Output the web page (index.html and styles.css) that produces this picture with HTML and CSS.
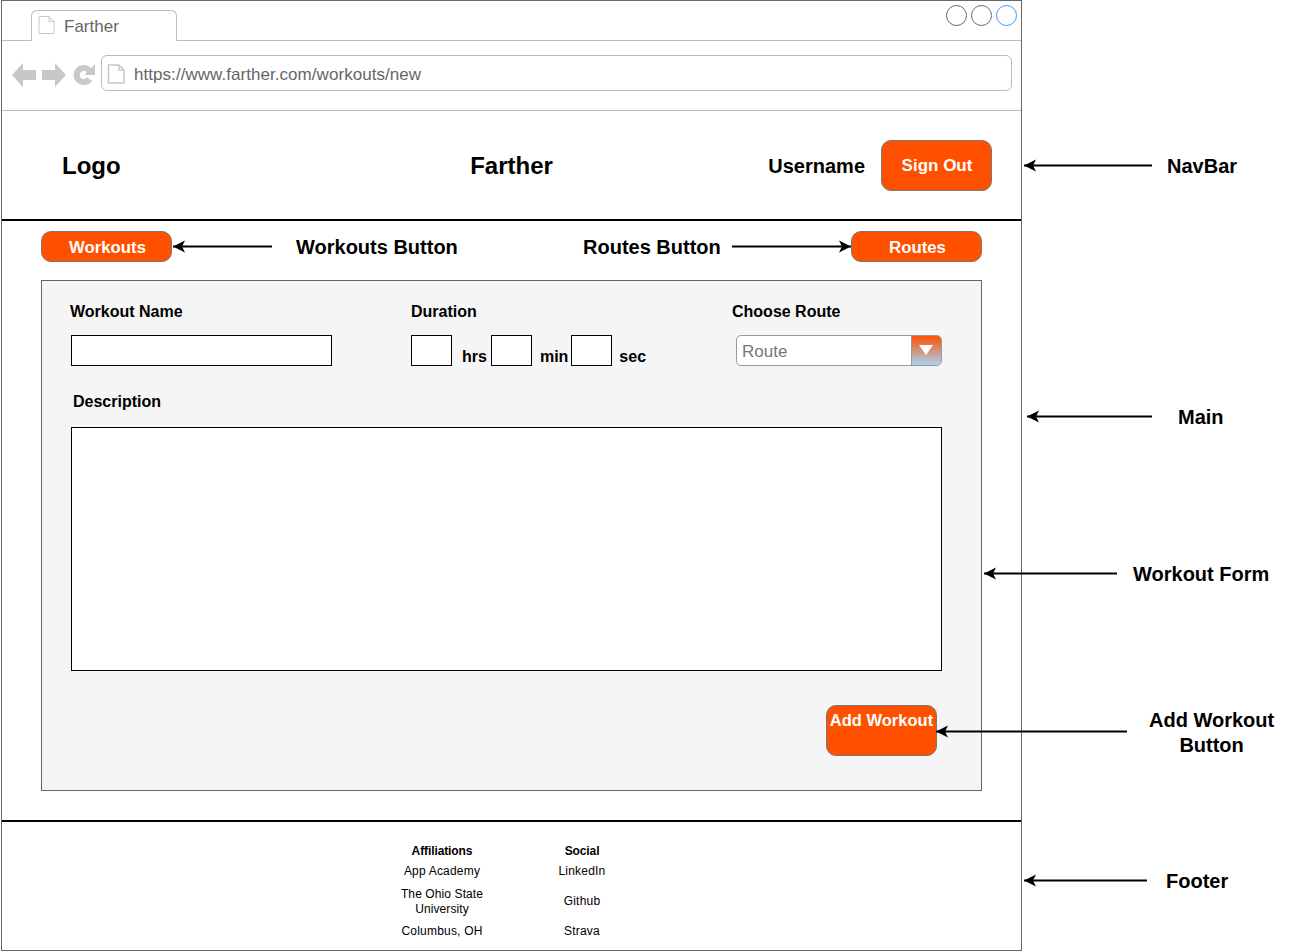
FILE: index.html
```html
<!DOCTYPE html>
<html lang="en">

<head>
    <meta charset="UTF-8" />
    <meta name="viewport" content="width=device-width, initial-scale=1" />
    <title>Farther - New Workout Wireframe</title>
    <link rel="stylesheet" href="styles.css">
</head>

<body>
    <div class="sheet">
        <div class="browser">
            <div class="tabbar">
                <div class="tab">
                    <svg class="page-icon" width="17" height="20" viewBox="0 0 17 20">
                        <path d="M1 1.500H11L16 6.500V18.500H1Z M11 1.500V6.500H16" fill="#fff" stroke="#c8c8c8" />
                    </svg>
                    <span class="tab-title">Farther</span>
                </div>
                <div class="win-buttons">
                    <span class="win-btn"></span>
                    <span class="win-btn"></span>
                    <span class="win-btn win-btn-active"></span>
                </div>
            </div>

            <div class="toolbar">
                <svg class="tool-icon" width="24" height="26" viewBox="0 0 24 26">
                    <path d="M0 13L11 1V8H24V18H11V25Z" fill="#c8c8c8" />
                </svg>
                <svg class="tool-icon" width="24" height="26" viewBox="0 0 24 26">
                    <path d="M24 13L13 1V8H0V18H13V25Z" fill="#c8c8c8" />
                </svg>
                <svg class="tool-icon" width="24" height="26" viewBox="0 0 24 26">
                    <path d="M17.500 17A7 7 0 1 1 17 8.500" fill="none" stroke="#c8c8c8" stroke-width="6" />
                    <path d="M23 2V13H12.500Z" fill="#c8c8c8" />
                </svg>
                <div class="address">
                    <svg class="page-icon" width="18" height="20" viewBox="0 0 18 20">
                        <path d="M1.500 1H12L17 6V19H1.500Z M12 1V6H17" fill="#fff" stroke="#c8c8c8" stroke-width="1.500" />
                    </svg>
                    <span class="address-url">https://www.farther.com/workouts/new</span>
                </div>
            </div>

            <nav class="navbar">
                <div class="logo">Logo</div>
                <div class="brand">Farther</div>
                <div class="user">
                    <span class="username">Username</span>
                    <button class="btn btn-signout" type="button">Sign Out</button>
                </div>
            </nav>

            <main class="main">
                <div class="switcher">
                    <button class="btn btn-small" type="button">Workouts</button>
                    <button class="btn btn-small" type="button">Routes</button>
                </div>

                <form class="workout-form" autocomplete="off">
                    <div class="fields">
                        <div class="field">
                            <label for="workoutName">Workout Name</label>
                            <input class="text-input name-input" type="text" id="workoutName" />
                        </div>
                        <div class="field">
                            <label for="hours">Duration</label>
                            <div class="duration">
                                <input class="text-input time-input" type="text" id="hours" aria-label="Hours" />
                                <span class="unit unit-hrs">hrs</span>
                                <input class="text-input time-input" type="text" aria-label="Minutes" />
                                <span class="unit unit-min">min</span>
                                <input class="text-input time-input" type="text" aria-label="Seconds" />
                                <span class="unit unit-sec">sec</span>
                            </div>
                        </div>
                        <div class="field">
                            <label>Choose Route</label>
                            <div class="route-select">
                                <span class="route-value">Route</span>
                                <span class="route-arrow"></span>
                            </div>
                        </div>
                    </div>

                    <label class="desc-label" for="description">Description</label>
                    <textarea class="text-input desc-input" id="description"></textarea>

                    <div class="form-actions">
                        <button class="btn btn-add" type="submit">Add Workout</button>
                    </div>
                </form>
            </main>

            <footer class="footer">
                <div class="footer-grid">
                    <strong>Affiliations</strong>
                    <strong>Social</strong>
                    <span>App Academy</span>
                    <span>LinkedIn</span>
                    <span class="footer-wrap">The Ohio State<br />University</span>
                    <span>Github</span>
                    <span>Columbus, OH</span>
                    <span>Strava</span>
                </div>
            </footer>
        </div>

        <!-- annotations around the wireframe -->
        <svg class="arrows" width="1297" height="951" viewBox="0 0 1297 951">
            <defs>
                <marker id="head" markerUnits="userSpaceOnUse" markerWidth="13" markerHeight="14" refX="12" refY="7"
                    orient="auto">
                    <path d="M0 1L12 7L0 13L3 7Z" fill="#000" />
                </marker>
            </defs>
            <g stroke="#000" stroke-width="2">
                <line x1="1152" y1="165.500" x2="1024" y2="165.500" marker-end="url(#head)" />
                <line x1="272" y1="246.500" x2="173" y2="246.500" marker-end="url(#head)" />
                <line x1="732" y1="246.500" x2="851" y2="246.500" marker-end="url(#head)" />
                <line x1="1152" y1="416.500" x2="1027" y2="416.500" marker-end="url(#head)" />
                <line x1="1117" y1="573.500" x2="984" y2="573.500" marker-end="url(#head)" />
                <line x1="1127" y1="731.500" x2="936" y2="731.500" marker-end="url(#head)" />
                <line x1="1147" y1="880.500" x2="1024" y2="880.500" marker-end="url(#head)" />
            </g>
        </svg>
        <div class="note note-navbar">NavBar</div>
        <div class="note note-workouts">Workouts Button</div>
        <div class="note note-routes">Routes Button</div>
        <div class="note note-main">Main</div>
        <div class="note note-form">Workout Form</div>
        <div class="note note-add">Add Workout<br />Button</div>
        <div class="note note-footer">Footer</div>
    </div>
</body>

</html>
```

FILE: styles.css
```css
* {
    box-sizing: border-box;
}

body {
    margin: 0;
    background: #fff;
    color: #000;
    font-family: "Liberation Sans", Arial, sans-serif;
}

.sheet {
    position: relative;
    width: 1297px;
    height: 951px;
    overflow: hidden;
}

/* browser chrome */
.browser {
    display: flex;
    flex-direction: column;
    width: 1021px;
    height: 951px;
    margin-left: 1px;
    border: 1px solid #666;
}

.tabbar {
    display: flex;
    justify-content: space-between;
    height: 40px;
    padding: 9px 4px 0 29px;
    border-bottom: 1px solid #bbb;
}

.tab {
    display: flex;
    align-items: center;
    gap: 9px;
    width: 146px;
    height: 31px;
    padding: 0 0 1px 6px;
    border: 1px solid #bbb;
    border-bottom: 1px solid #fff;
    border-radius: 6px 6px 0 0;
    background: #fff;
    color: #666;
    font-size: 17px;
}

.tab-title {
    padding-top: 4px;
}

.win-buttons {
    display: flex;
    gap: 4px;
    margin-top: -5px;
}

.win-btn {
    width: 21px;
    height: 21px;
    border: 1px solid #666;
    border-radius: 50%;
}

.win-btn-active {
    border-color: #39f;
}

.toolbar {
    display: flex;
    align-items: center;
    gap: 6px;
    height: 70px;
    padding: 0 9px 2px 10px;
    border-bottom: 1px solid #bbb;
}

.tool-icon {
    flex: none;
}

.address {
    display: flex;
    align-items: center;
    gap: 9px;
    flex: 1;
    height: 36px;
    margin: 0 0 4px -1px;
    padding: 2px 0 0 5px;
    border: 1px solid #bbb;
    border-radius: 6px;
    color: #666;
    font-size: 17px;
    letter-spacing: 0.05px;
}

.address-url {
    padding-top: 2px;
}

.page-icon {
    flex: none;
}

/* navbar */
.navbar {
    display: grid;
    grid-template-columns: 1fr auto 1fr;
    align-items: center;
    height: 110px;
    padding: 2px 29px 0;
    border-bottom: 2px solid #000;
}

.logo,
.brand {
    font-size: 24px;
    font-weight: 700;
}

.logo {
    margin-left: 31px;
}

.user {
    display: flex;
    align-items: center;
    justify-content: flex-end;
    gap: 16px;
}

.username {
    font-size: 20px;
    font-weight: 700;
}

.btn {
    border: 1px solid #777;
    background: #ff5000;
    color: #fff;
    font-family: inherit;
    font-weight: 700;
    font-size: 17px;
    cursor: pointer;
}

.btn-signout {
    width: 111px;
    height: 51px;
    margin-top: -2px;
    padding: 2px 0 0 1px;
    border-radius: 10px;
}

/* main */
.main {
    flex: 1;
    padding: 10px 39px 0;
    border-bottom: 2px solid #000;
}

.switcher {
    display: flex;
    justify-content: space-between;
    margin-bottom: 18px;
}

.btn-small {
    width: 131px;
    height: 31px;
    padding: 2px 0 0 2px;
    border-radius: 10px;
    font-size: 16.800px;
}

.workout-form {
    height: 511px;
    padding: 21px 39px 0 28px;
    border: 1px solid #666;
    background: #f5f5f5;
}

.fields {
    display: grid;
    grid-template-columns: 341px 321px 1fr;
}

.field label,
.desc-label {
    display: block;
    font-size: 16px;
    font-weight: 700;
    line-height: 20px;
}

.field label {
    margin-bottom: 13px;
}

.text-input {
    display: block;
    border: 1px solid #000;
    border-radius: 0;
    background: #fff;
    outline: none;
}

.name-input {
    width: 261px;
    height: 31px;
    margin-left: 1px;
}

.duration {
    display: flex;
    align-items: flex-end;
}

.time-input {
    width: 41px;
    height: 31px;
}

.unit {
    font-size: 16px;
    font-weight: 700;
    line-height: 20px;
}

.unit-hrs {
    margin: 0 4px -1px 10px;
}

.unit-min {
    margin: 0 3px -1px 8px;
}

.unit-sec {
    margin: 0 0 -1px 7px;
}

.route-select {
    display: flex;
    justify-content: space-between;
    width: 206px;
    height: 31px;
    margin-left: 4px;
    border: 1px solid #999;
    border-radius: 5px;
    background: #fff;
    color: #777;
    font-size: 17px;
    line-height: 31px;
    overflow: hidden;
}

.route-value {
    padding-left: 5px;
}

.route-arrow {
    position: relative;
    width: 30px;
    border-left: 1px solid #999;
    background: linear-gradient(#ff5000, #a8d4f4);
}

.route-arrow::after {
    content: "";
    position: absolute;
    left: 7px;
    top: 9px;
    border-left: 7px solid transparent;
    border-right: 7px solid transparent;
    border-top: 10px solid #fff;
}

.desc-label {
    margin: 26px 0 15px 3px;
}

.desc-input {
    width: 871px;
    height: 244px;
    margin-left: 1px;
    resize: none;
}

.form-actions {
    display: flex;
    justify-content: flex-end;
    margin: 34px 5px 0 0;
}

.btn-add {
    display: flex;
    justify-content: center;
    width: 111px;
    height: 51px;
    padding: 5px 0 0;
    border-radius: 10px;
    font-size: 16.500px;
    white-space: nowrap;
}

/* footer */
.footer {
    height: 128px;
    padding-top: 19px;
    font-size: 12px;
}

.footer-grid {
    display: grid;
    grid-template-columns: 140px 140px;
    grid-template-rows: 20px 20px 40px 20px;
    justify-content: center;
    align-items: center;
    margin-left: 1px;
    text-align: center;
    line-height: 15px;
    letter-spacing: 0.2px;
}

.footer-grid strong {
    letter-spacing: -0.1px;
}

.footer-wrap {
    padding-top: 2px;
    letter-spacing: 0.1px;
}

/* annotations */
.arrows {
    position: absolute;
    left: 0;
    top: 0;
    pointer-events: none;
}

.note {
    position: absolute;
    font-size: 20px;
    font-weight: 700;
    line-height: 25px;
    text-align: center;
    white-space: nowrap;
}

.note-navbar {
    left: 1167px;
    top: 154px;
}

.note-workouts {
    left: 296px;
    top: 235px;
}

.note-routes {
    left: 583px;
    top: 235px;
}

.note-main {
    left: 1178px;
    top: 405px;
}

.note-form {
    left: 1133px;
    top: 562px;
}

.note-add {
    left: 1149px;
    top: 708px;
}

.note-footer {
    left: 1166px;
    top: 869px;
}
```
